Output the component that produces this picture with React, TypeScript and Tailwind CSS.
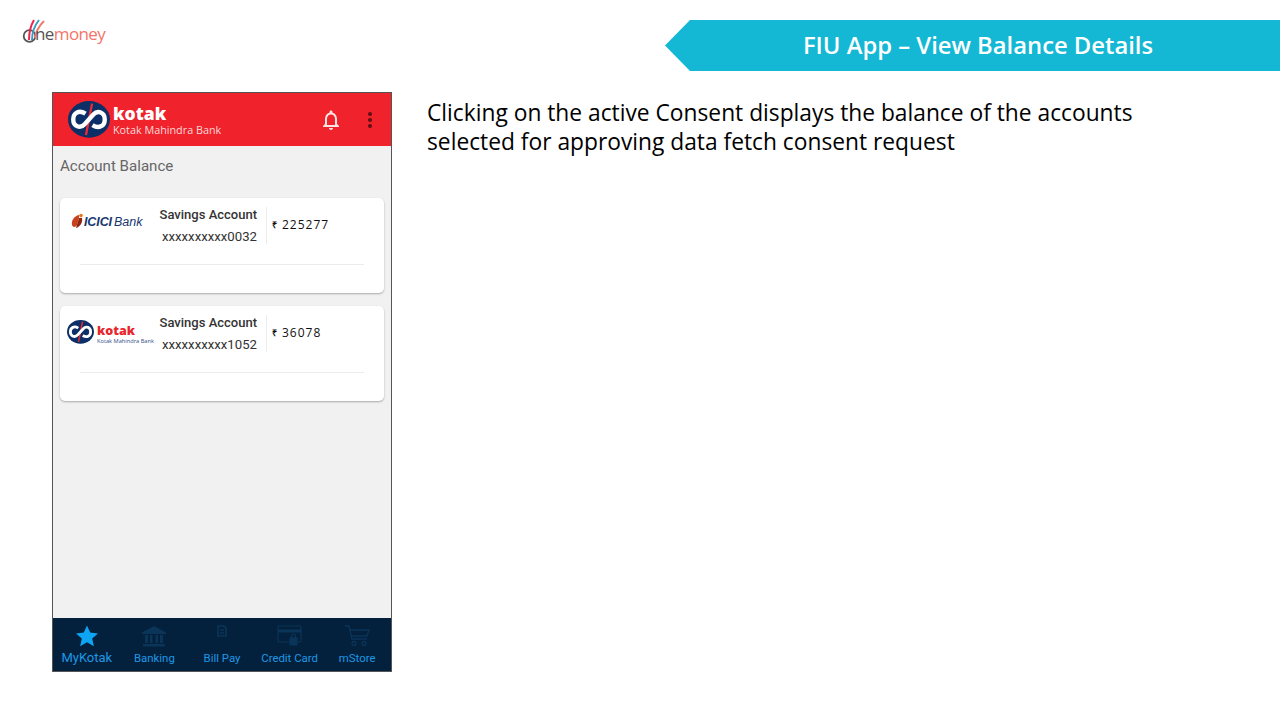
import { MdMoreVert, MdNotificationsNone } from "react-icons/md";

function KotakMark({ width }: { width: number }) {
  return (
    <svg width={width} height={width * 0.875} viewBox="0 0 48 42" className="shrink-0">
      <ellipse cx="24" cy="21" rx="24" ry="21" fill="#0d2f68" />
      <path d="M27.5 3 L20.5 39" stroke="#ee2a30" strokeWidth="2.6" />
      <path
        d="M20 14.5 C13 10 6 13 6 21 C6 29 14 32 19 26.5 L29 15.5 C34 10 42 13 42 21 C42 29 35 32 28 27.5"
        fill="none"
        stroke="#fff"
        strokeWidth="5"
      />
    </svg>
  );
}

function OneMoneyLogo() {
  return (
    <div className="relative h-[26px] w-[84px] font-['Open_Sans',sans-serif] text-[17px] leading-[26px] tracking-[-0.6px]">
      <svg width="24" height="26" viewBox="0 0 24 26" className="absolute left-0 top-[-1px]">
        <circle cx="7.5" cy="17" r="5.8" fill="none" stroke="#555" strokeWidth="1.8" />
        <path d="M7 21 C7 13 9 6 12 1" fill="none" stroke="#e8264f" strokeWidth="2" />
        <path d="M10 21 C10 13 13 6 17 1" fill="none" stroke="#3a9ec2" strokeWidth="2" />
        <path d="M13 19 C14 12 18 6 22 2" fill="none" stroke="#f37a6b" strokeWidth="2" />
      </svg>
      <span className="absolute left-[13px] top-[1px] whitespace-nowrap">
        <span className="text-[#555]">ne</span>
        <span className="text-[#f4746a]">money</span>
      </span>
    </div>
  );
}

function IciciLogo() {
  return (
    <div className="flex items-center">
      <svg width="14" height="16" viewBox="0 0 14 16" className="shrink-0">
        <path d="M8 2 C3 3 0 8 1 12 C2 15 5 14 6 12 L8 5 Z" fill="#c8401c" />
        <circle cx="10" cy="2.6" r="1.8" fill="#e8791e" />
        <path d="M8 5 L5 15 C9 14 12 9 11 5 Z" fill="#8e2412" />
      </svg>
      <span className="ml-[-1px] mt-[3px] whitespace-nowrap font-['Liberation_Sans',sans-serif] text-[12.5px] font-bold italic leading-none tracking-[-0.1px] text-[#17386f]">
        ICICI
      </span>
      <span className="ml-[2px] mt-[3px] whitespace-nowrap font-['Liberation_Sans',sans-serif] text-[12.5px] italic leading-none text-[#17386f]">
        Bank
      </span>
    </div>
  );
}

function KotakLogo() {
  return (
    <div className="flex items-center gap-[3px]">
      <KotakMark width={27} />
      <div className="mt-[5px] flex flex-col">
        <span className="font-['Open_Sans',sans-serif] text-[12.5px] font-extrabold leading-[13px] text-[#e8262d]">kotak</span>
        <span className="whitespace-nowrap font-['Open_Sans',sans-serif] text-[5.7px] leading-[8px] text-[#33508c]">
          Kotak Mahindra Bank
        </span>
      </div>
    </div>
  );
}

function AccountCard({ logo, pad, number, amount }: { logo: React.ReactNode; pad: string; number: string; amount: string }) {
  return (
    <div className="h-[95px] rounded-[5px] bg-white px-[20px] shadow-[0_1px_2px_rgba(0,0,0,0.3)]">
      <div className="relative flex h-[67px] items-start border-b border-[#ececec] pt-[9px]">
        <div className={`absolute ${pad}`}>{logo}</div>
        <div className="ml-[75px] w-[102px] text-right font-['Roboto',sans-serif]">
          <p className="whitespace-nowrap text-[13px] font-medium leading-[16px] text-[#333]">Savings Account</p>
          <p className="mt-[6px] whitespace-nowrap text-[13.2px] leading-[16px] text-[#333]">{number}</p>
        </div>
        <div className="ml-[9px] h-[37px] border-l border-[#ececec] pl-[5px]">
          <p className="mt-[10px] flex items-center font-['Open_Sans',sans-serif] text-[12px] font-medium leading-[16px] tracking-[1px] text-[#111]">
            <span className="mr-[4px] text-[9px] font-bold">₹</span>
            {amount}
          </p>
        </div>
      </div>
    </div>
  );
}

const dim = "#0b3558";

const navItems = [
  {
    label: "MyKotak",
    size: "text-[13px]",
    icon: (
      <svg width="24" height="22" viewBox="0 0 24 22">
        <path d="M12 0.5 L15.2 7.6 L23 8.4 L17.2 13.6 L18.9 21.2 L12 17.3 L5.1 21.2 L6.8 13.6 L1 8.4 L8.8 7.6 Z" fill="#0ea5f5" />
      </svg>
    ),
  },
  {
    label: "Banking",
    size: "text-[11.4px]",
    icon: (
      <svg width="26" height="22" viewBox="0 0 26 22" fill={dim}>
        <path d="M13 1 L25 7.5 L25 9 L1 9 L1 7.5 Z" />
        <path d="M4 10h3v8H4zM9 10h2.5v8H9zM14.5 10H17v8h-2.5zM19 10h3v8h-3zM2 19h22v2.5H2z" />
      </svg>
    ),
  },
  {
    label: "Bill Pay",
    size: "text-[11.4px]",
    icon: (
      <svg width="26" height="22" viewBox="0 0 26 22" fill="none" stroke={dim} strokeWidth="1.6">
        <path d="M9 1 H15 L17 3 V11 H9 Z" />
        <path d="M11 5 H15 M11 8 H15" />
      </svg>
    ),
  },
  {
    label: "Credit Card",
    size: "text-[11.4px]",
    icon: (
      <svg width="26" height="22" viewBox="0 0 26 22" fill="none" stroke={dim} strokeWidth="1.2">
        <rect x="1" y="1" width="23" height="16" rx="1" />
        <path d="M1 6 H24" strokeWidth="3" />
        <rect x="13" y="13" width="7" height="7" fill={dim} />
        <path d="M14.5 13 V11 A2 2 0 0 1 18.5 11 V13" />
      </svg>
    ),
  },
  {
    label: "mStore",
    size: "text-[11.4px]",
    icon: (
      <svg width="26" height="22" viewBox="0 0 26 22" fill="none" stroke={dim} strokeWidth="1.3">
        <path d="M1 1 H5 L8 14 H23" />
        <path d="M6 5 H25 L23 11 H7.5" />
        <circle cx="10" cy="18.5" r="2" />
        <circle cx="20" cy="18.5" r="2" />
      </svg>
    ),
  },
];

export default function App() {
  return (
    <div className="h-[720px] w-[1280px] overflow-hidden bg-white">
      {/* Top bar */}
      <div className="flex h-[92px] items-start justify-between pl-[22px] pt-[20px]">
        <OneMoneyLogo />
        <div className="flex h-[51px] w-[615px] items-center justify-center bg-[#14b8d4] pl-[11px] font-['Open_Sans',sans-serif] text-[23.8px] font-semibold text-white [clip-path:polygon(25px_0,100%_0,100%_100%,25px_100%,0_50%)]">
          FIU App – View Balance Details
        </div>
      </div>

      <div className="flex items-start pl-[52px]">
        {/* Phone */}
        <div className="flex h-[580px] w-[340px] flex-col border border-[#555]">
          <div className="flex h-[53px] items-center justify-between bg-[#f0222b] pl-[15px] pr-[9px]">
            <div className="flex items-center gap-[3px]">
              <KotakMark width={42} />
              <div className="flex flex-col text-white">
                <span className="mt-[1px] font-['Open_Sans',sans-serif] text-[17.5px] font-extrabold leading-[17px]">kotak</span>
                <span className="mt-[1px] whitespace-nowrap font-['Open_Sans',sans-serif] text-[10.8px] leading-[13px] text-[#fbdada]">
                  Kotak Mahindra Bank
                </span>
              </div>
            </div>
            <div className="flex items-center gap-[15px]">
              <MdNotificationsNone size={24} className="text-[#fde4e4]" />
              <MdMoreVert size={24} className="text-[#5e1016]" />
            </div>
          </div>

          <div className="flex flex-1 flex-col bg-[#f1f1f1] px-[7px]">
            <p className="mt-[10px] font-['Roboto',sans-serif] text-[15.1px] leading-[20px] text-[#666]">Account Balance</p>
            <div className="mt-[22px] flex flex-col gap-[13px]">
              <AccountCard logo={<IciciLogo />} pad="left-[-9px] top-[15px]" number="xxxxxxxxxx0032" amount="225277" />
              <AccountCard logo={<KotakLogo />} pad="left-[-13px] top-[13px]" number="xxxxxxxxxx1052" amount="36078" />
            </div>
          </div>

          <div className="grid h-[53px] grid-cols-5 bg-[#03203d]">
            {navItems.map((item) => (
              <div key={item.label} className="flex flex-col items-center pt-[7px]">
                <div className="h-[22px]">{item.icon}</div>
                <span className={`mt-[3px] whitespace-nowrap font-['Roboto',sans-serif] leading-[16px] text-[#1e98e4] ${item.size}`}>
                  {item.label}
                </span>
              </div>
            ))}
          </div>
        </div>

        <p className="ml-[35px] mt-[6px] w-[760px] font-['Open_Sans',sans-serif] text-[22.77px] leading-[29px] text-black">
          Clicking on the active Consent displays the balance of the accounts
          <br />
          selected for approving data fetch consent request
        </p>
      </div>
    </div>
  );
}
